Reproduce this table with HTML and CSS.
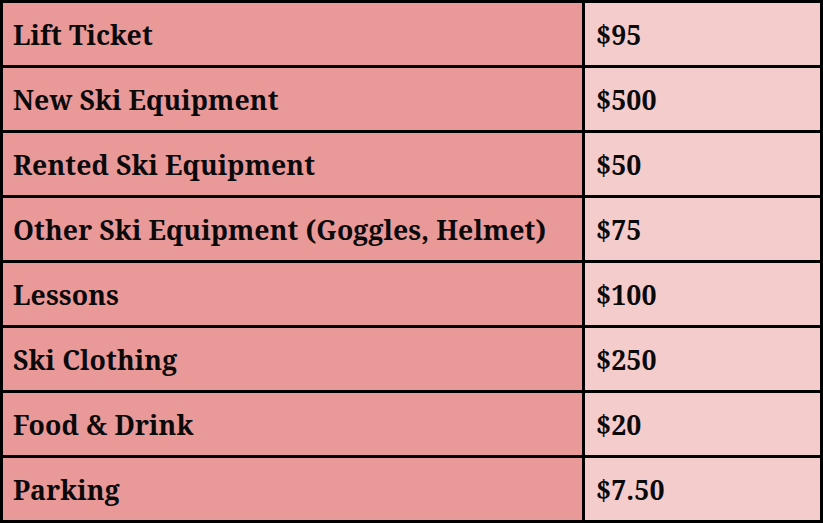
FILE: index.html
```html
<!DOCTYPE html>
<html>
<head>
<meta charset="utf-8">
<title>Ski Costs</title>
<link rel="stylesheet" href="styles.css">
</head>
<body>
<table class="costs">
  <tbody>
    <tr><td class="item">Lift Ticket</td><td class="price">$95</td></tr>
    <tr><td class="item">New Ski Equipment</td><td class="price">$500</td></tr>
    <tr><td class="item">Rented Ski Equipment</td><td class="price">$50</td></tr>
    <tr><td class="item">Other Ski Equipment (Goggles, Helmet)</td><td class="price">$75</td></tr>
    <tr><td class="item">Lessons</td><td class="price">$100</td></tr>
    <tr><td class="item">Ski Clothing</td><td class="price">$250</td></tr>
    <tr><td class="item">Food &amp; Drink</td><td class="price">$20</td></tr>
    <tr><td class="item">Parking</td><td class="price">$7.50</td></tr>
  </tbody>
</table>
</body>
</html>
```
FILE: styles.css
```css
html, body {
  margin: 0;
  padding: 0;
  background: #ffffff;
}

.costs {
  border-collapse: collapse;
  width: 823px;
  table-layout: fixed;
  font-family: "Noto Serif", "DejaVu Serif", serif;
  font-weight: bold;
  font-size: 26.67px;
  letter-spacing: 0.1px;
  color: #0a0a0a;
}

.costs td {
  border: 3px solid #000000;
  height: 62px;
  padding: 2px 0 0 10px;
  box-sizing: border-box;
  vertical-align: middle;
  white-space: nowrap;
  line-height: 1;
}

.costs tr {
  height: 65px;
}

.costs .item {
  width: 582px;
  background: #ea9999;
}

.costs .price {
  background: #f4cccc;
  padding-left: 11px;
}
```
